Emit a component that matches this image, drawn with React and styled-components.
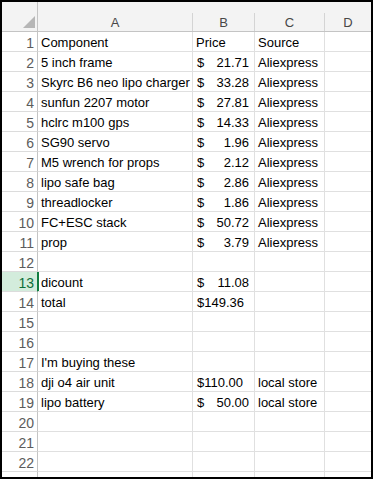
import React from 'react';
import styled, { createGlobalStyle } from 'styled-components';

const GlobalStyle = createGlobalStyle`
  html, body {
    margin: 0;
    padding: 0;
    background: #ffffff;
  }
  body {
    font-family: 'Liberation Sans', Arial, sans-serif;
  }
`;

const Frame = styled.div`
  width: 373px;
  height: 479px;
  box-sizing: border-box;
  border: 2px solid #000;
  overflow: hidden;
  background: #fff;
`;

const Sheet = styled.div`
  display: grid;
  grid-template-columns: 36px 155px 62px 70px 1fr;
  grid-template-rows: 30px;
  grid-auto-rows: 20px;
`;

const Corner = styled.div`
  box-sizing: border-box;
  background: #f3f3f3;
  border-right: 1px solid #c4c4c4;
  border-bottom: 1px solid #c4c4c4;
  display: flex;
  align-items: flex-end;
  justify-content: flex-end;
  padding: 0 2px 3px 0;
`;

const ColHead = styled.div`
  box-sizing: border-box;
  background: #f3f3f3;
  border-bottom: 1px solid #c4c4c4;
  display: flex;
  align-items: flex-end;
`;

const ColLabel = styled.div`
  flex: 1;
  height: 18px;
  box-sizing: border-box;
  border-right: ${(p) => (p.$last ? 'none' : '1px solid #d4d4d4')};
  text-align: center;
  font-size: 13px;
  line-height: 19px;
  color: #474747;
`;

const RowHead = styled.div`
  box-sizing: border-box;
  background: ${(p) => (p.$active ? '#d3ecdc' : '#fff')};
  color: ${(p) => (p.$active ? '#0e6e39' : '#5c5c5c')};
  border-right: 1px solid ${(p) => (p.$active ? '#107c41' : '#c4c4c4')};
  border-bottom: 1px solid #dcdcdc;
  box-shadow: ${(p) => (p.$active ? '1px 0 0 #107c41' : 'none')};
  font-size: 14px;
  line-height: 17px;
  text-align: right;
  padding: 3px 3px 0 0;
  overflow: hidden;
`;

const Cell = styled.div`
  box-sizing: border-box;
  border-right: ${(p) => (p.$last ? 'none' : '1px solid #e0e0e0')};
  border-bottom: 1px solid #e0e0e0;
  font-size: 13px;
  line-height: 16px;
  color: #000;
  padding: 3px 2px 0 3px;
  white-space: nowrap;
  overflow: hidden;
`;

const Money = styled(Cell)`
  display: flex;
  justify-content: space-between;
  padding: 3px 5px 0 4px;
`;

const Triangle = () => (
  <svg width="12" height="12" viewBox="0 0 12 12">
    <polygon points="12,0 12,12 0,12" fill="#b6b6b6" />
  </svg>
);

const rows = [
  ['Component', 'Price', 'Source'],
  ['5 inch frame', 21.71, 'Aliexpress'],
  ['Skyrc B6 neo lipo charger', 33.28, 'Aliexpress'],
  ['sunfun 2207 motor', 27.81, 'Aliexpress'],
  ['hclrc m100 gps', 14.33, 'Aliexpress'],
  ['SG90 servo', 1.96, 'Aliexpress'],
  ['M5 wrench for props', 2.12, 'Aliexpress'],
  ['lipo safe bag', 2.86, 'Aliexpress'],
  ['threadlocker', 1.86, 'Aliexpress'],
  ['FC+ESC stack', 50.72, 'Aliexpress'],
  ['prop', 3.79, 'Aliexpress'],
  ['', '', ''],
  ['dicount', 11.08, ''],
  ['total', 149.36, ''],
  ['', '', ''],
  ['', '', ''],
  ["I'm buying these", '', ''],
  ['dji o4 air unit', 110, 'local store'],
  ['lipo battery', 50, 'local store'],
  ['', '', ''],
  ['', '', ''],
  ['', '', ''],
];

const ACTIVE_ROW = 13;

function PriceCell({ value }) {
  if (typeof value !== 'number') return <Cell>{value}</Cell>;
  const text = value.toFixed(2);
  if (value >= 100) return <Cell style={{ paddingLeft: 4 }}>${text}</Cell>;
  return (
    <Money>
      <span>$</span>
      <span>{text}</span>
    </Money>
  );
}

export default function App() {
  return (
    <>
      <GlobalStyle />
      <Frame>
        <Sheet>
          <Corner>
            <Triangle />
          </Corner>
          {['A', 'B', 'C', 'D'].map((l, i) => (
            <ColHead key={l}>
              <ColLabel $last={i === 3}>{l}</ColLabel>
            </ColHead>
          ))}
          {rows.map((r, i) => (
            <React.Fragment key={i}>
              <RowHead $active={i + 1 === ACTIVE_ROW}>{i + 1}</RowHead>
              <Cell>{r[0]}</Cell>
              <PriceCell value={r[1]} />
              <Cell>{r[2]}</Cell>
              <Cell $last />
            </React.Fragment>
          ))}
          <RowHead />
          <Cell />
          <Cell />
          <Cell />
          <Cell $last />
        </Sheet>
      </Frame>
    </>
  );
}
